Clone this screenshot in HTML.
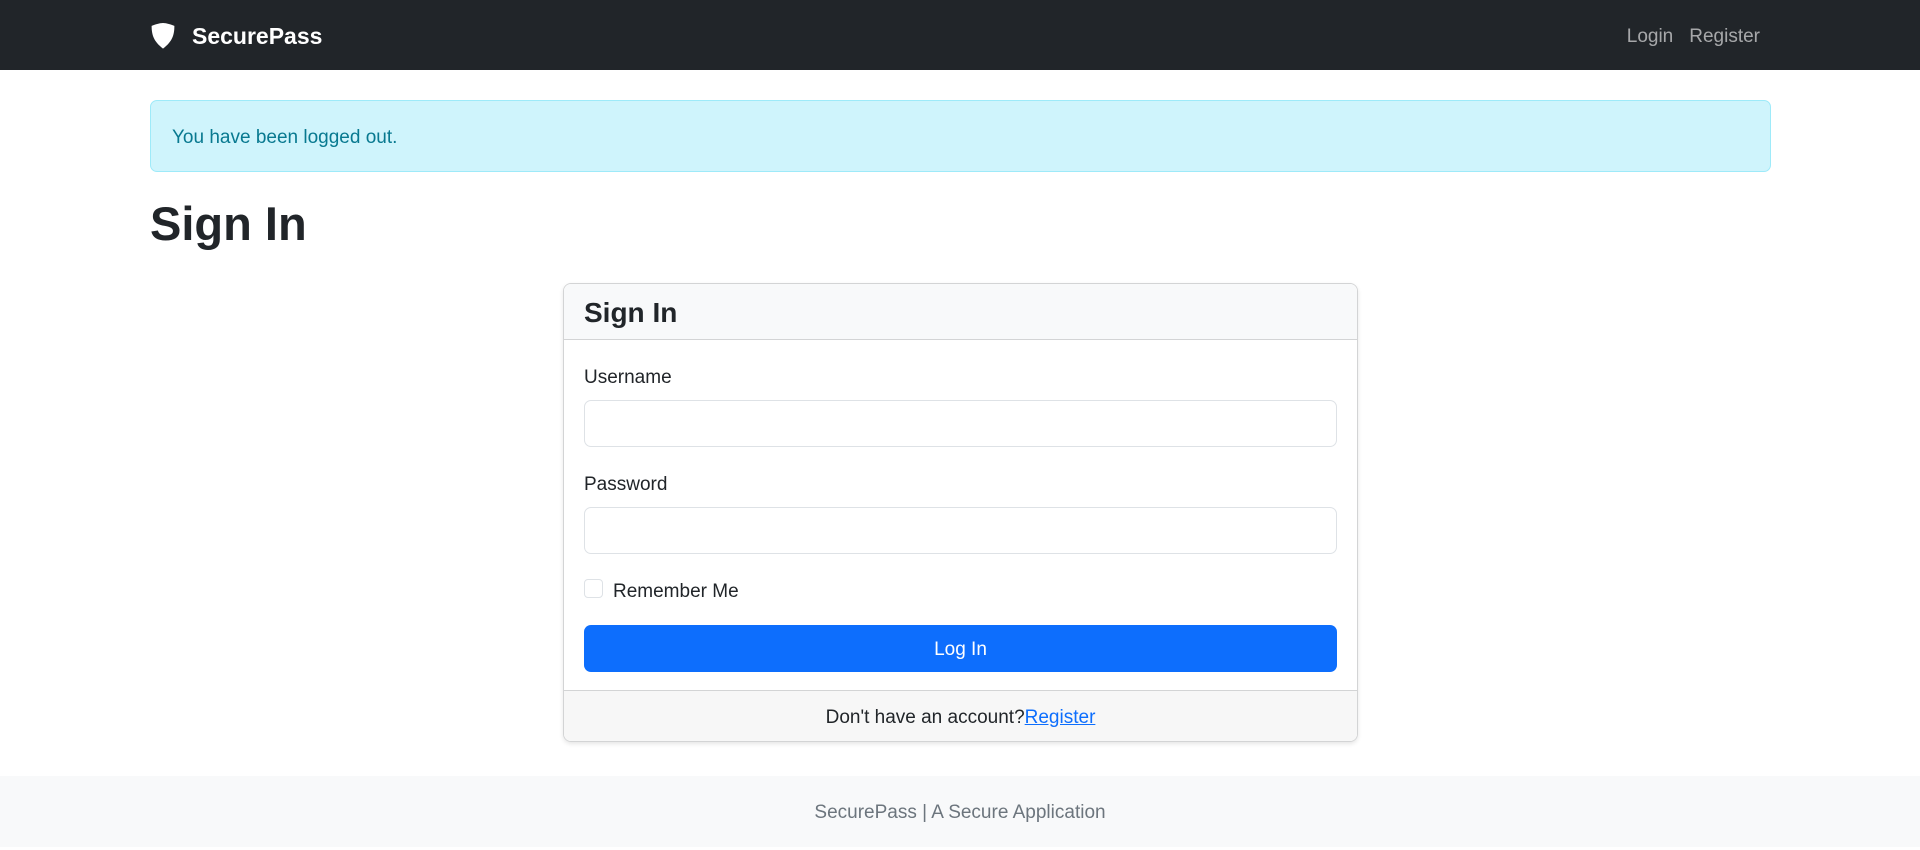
<!DOCTYPE html>
<html><head><meta charset="utf-8"><style>
*{box-sizing:border-box;margin:0;padding:0}
body{width:1920px;height:847px;font-family:"Liberation Sans",sans-serif;font-size:20px;color:#212529;background:#fff;position:relative;overflow:hidden}
.nav{position:absolute;top:0;left:0;width:1920px;height:70px;background:#212529}
.brand{position:absolute;left:150px;top:22px;color:#fff;font-weight:bold;font-size:23px;display:flex;align-items:center}
.brand svg{margin-right:16px}
.links{position:absolute;right:160px;top:26px;color:rgba(255,255,255,.6);font-size:19px}
.links span{margin-left:16px}
.alert{position:absolute;left:150px;top:100px;width:1621px;height:72px;background:#cff4fc;border:1px solid #9eeaf9;border-radius:7px;color:#087990;padding:26px 21px 0;font-size:19px}
h1{position:absolute;left:150px;top:196px;font-size:47px;font-weight:bold;line-height:1.2}
.card{position:absolute;left:563px;top:283px;width:795px;height:459px;border:1px solid #d3d4d5;border-radius:8px;box-shadow:0 2px 4px rgba(0,0,0,.1);overflow:hidden}
.ch{height:56px;background:#f8f9fa;border-bottom:1px solid #d3d4d5;padding:13px 20px 0;font-size:28px;font-weight:bold}
.lbl{position:absolute;left:20px;font-size:19px}
.inp{position:absolute;left:20px;width:753px;height:47px;border:1px solid #dee2e6;border-radius:7px}
.cb{position:absolute;left:20px;top:295px;width:19px;height:19px;border:1px solid #dee2e6;border-radius:4px}
.btn{position:absolute;left:20px;top:341px;width:753px;height:47px;background:#0d6efd;border-radius:7px;color:#fff;text-align:center;line-height:49px;font-size:19px}
.cf{position:absolute;left:0;bottom:0;width:100%;height:51px;background:#f7f7f7;border-top:1px solid #d3d4d5;text-align:center;line-height:54px;font-size:19px}
.cf a{color:#0d6efd;text-decoration:underline}
.foot{position:absolute;left:0;top:776px;width:1920px;height:71px;background:#f8f9fa;text-align:center;line-height:74px;color:#6c757d;font-size:19px}
</style></head><body>
<div class="nav"><div class="brand"><svg width="26" height="28" viewBox="0 0 16 17"><path d="M8 0.5C5.8 0.5 3 1.5 1 2.3c0 5.5 1.2 9.5 7 14 5.8-4.5 7-8.5 7-14C13 1.5 10.2.5 8 .5z" fill="#fff"/></svg>SecurePass</div>
<div class="links"><span>Login</span><span>Register</span></div></div>
<div class="alert">You have been logged out.</div>
<h1>Sign In</h1>
<div class="card"><div class="ch">Sign In</div>
<div class="lbl" style="top:83px">Username</div><div class="inp" style="top:116px"></div>
<div class="lbl" style="top:190px">Password</div><div class="inp" style="top:223px"></div>
<div class="cb"></div><div class="lbl" style="top:297px;left:49px">Remember Me</div>
<div class="btn">Log In</div>
<div class="cf">Don't have an account?<a>Register</a></div></div>
<div class="foot">SecurePass | A Secure Application</div>
</body></html>
